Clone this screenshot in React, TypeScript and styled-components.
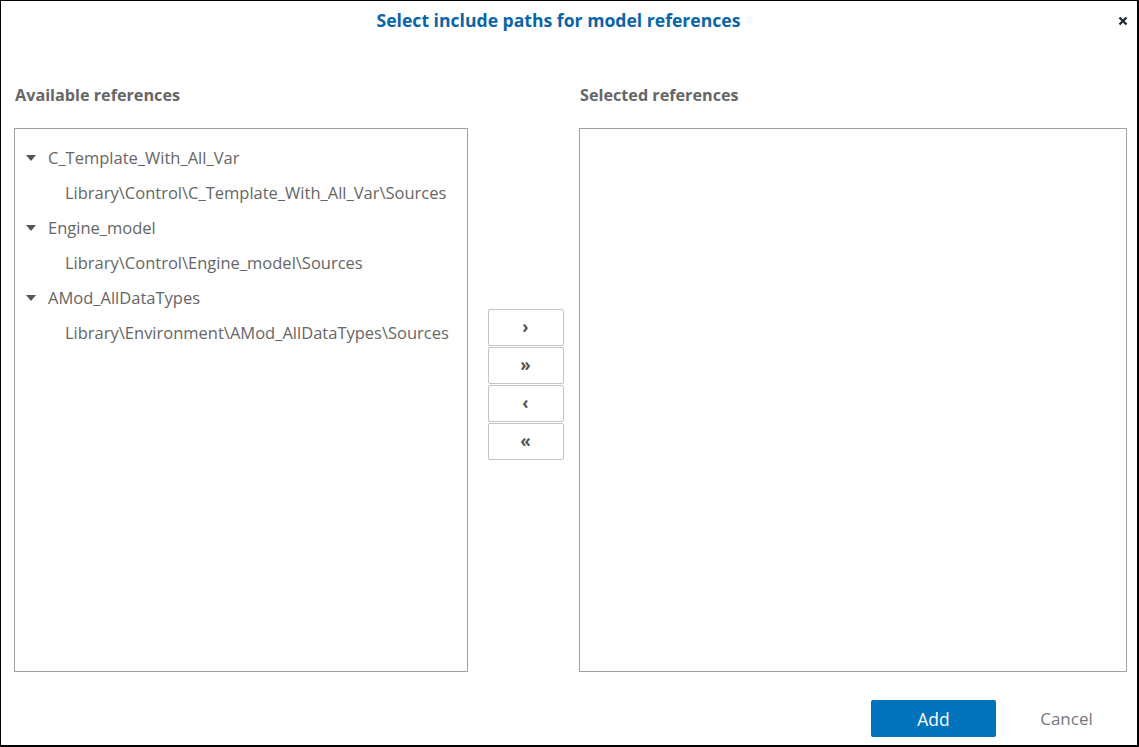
import React from "react";
import styled, { createGlobalStyle } from "styled-components";

const Global = createGlobalStyle`
  html, body { margin: 0; padding: 0; background: #fff; }
  body { font-family: "Open Sans", "Noto Sans", Arial, sans-serif; }
  * { box-sizing: border-box; }
`;

const Dialog = styled.div`
  width: 1139px;
  height: 747px;
  border-style: solid;
  border-color: #000;
  border-width: 1px 2px 2px 1px;
  display: flex;
  flex-direction: column;
  background: #fff;
`;

const Header = styled.div`
  display: flex;
  align-items: center;
  height: 40px;
`;

const Title = styled.h1`
  flex: 1;
  margin: 0;
  padding-bottom: 2px;
  text-align: center;
  font-size: 17.6px;
  font-weight: 700;
  color: #0a64a8;
  line-height: 38px;
`;

const CloseButton = styled.button`
  width: 21px;
  height: 40px;
  padding: 0 7px 0 0;
  border: none;
  background: none;
  display: flex;
  align-items: center;
  justify-content: center;
  cursor: pointer;
`;

const Body = styled.div`
  display: flex;
  padding: 40px 0 0 13px;
`;

const Column = styled.div<{ $w: number }>`
  width: ${(p) => p.$w}px;
  display: flex;
  flex-direction: column;
`;

const Label = styled.div`
  font-size: 16.2px;
  font-weight: 700;
  color: #666;
  line-height: 28px;
  padding-left: 1px;
  margin-bottom: 19px;
`;

const ListBox = styled.div`
  height: 544px;
  border: 1px solid #a0a0a0;
  padding: 11px 0 0 0;
`;

const Middle = styled.div`
  width: 111px;
  display: flex;
  flex-direction: column;
  align-items: center;
  padding-top: 228px;
  gap: 1px;
  padding-left: 4px;
`;

const MoveButton = styled.button`
  width: 76px;
  height: 37px;
  border: 1px solid #c4c4c4;
  border-radius: 2px;
  background: #fff;
  color: #555;
  font-family: "Open Sans", Arial, sans-serif;
  font-size: 17px;
  font-weight: 700;
  line-height: 1;
  padding: 0 0 2px 0;
  display: flex;
  align-items: center;
  justify-content: center;
  cursor: pointer;
`;

const TreeRow = styled.div<{ $level: number }>`
  display: flex;
  align-items: center;
  height: 35px;
  padding-left: ${(p) => (p.$level === 0 ? 11 : 50)}px;
  font-size: 16.5px;
  color: #666;
  white-space: nowrap;
`;

const Caret = styled.svg`
  width: 10px;
  height: 6px;
  margin-right: 12px;
  flex: none;
`;

const Footer = styled.div`
  display: flex;
  justify-content: flex-end;
  align-items: center;
  padding: 28px 0 0 0;
`;

const PrimaryButton = styled.button`
  width: 125px;
  height: 37px;
  border: none;
  border-radius: 2px;
  background: #0073bb;
  color: #fff;
  font-family: "Open Sans", Arial, sans-serif;
  font-size: 17.5px;
  cursor: pointer;
`;

const TextButton = styled.button`
  width: 141px;
  height: 37px;
  border: none;
  background: none;
  color: #777;
  font-family: "Open Sans", Arial, sans-serif;
  font-size: 17px;
  padding: 0;
  cursor: pointer;
`;

const tree = [
  { name: "C_Template_With_All_Var", path: "Library\\Control\\C_Template_With_All_Var\\Sources" },
  { name: "Engine_model", path: "Library\\Control\\Engine_model\\Sources" },
  { name: "AMod_AllDataTypes", path: "Library\\Environment\\AMod_AllDataTypes\\Sources" },
];

export default function App() {
  return (
    <>
      <Global />
      <Dialog>
        <Header>
          <Title>Select include paths for model references</Title>
          <CloseButton aria-label="Close">
            <svg width="10" height="10" viewBox="0 0 10 10">
              <path d="M1.5 1.5 L8.5 8.5 M8.5 1.5 L1.5 8.5" stroke="#1d2b33" strokeWidth="2.4" strokeLinecap="butt" />
            </svg>
          </CloseButton>
        </Header>
        <Body>
          <Column $w={454}>
            <Label>Available references</Label>
            <ListBox>
              {tree.map((t) => (
                <React.Fragment key={t.name}>
                  <TreeRow $level={0}>
                    <Caret viewBox="0 0 10 6">
                      <path d="M0 0 L10 0 L5 6 Z" fill="#555" />
                    </Caret>
                    {t.name}
                  </TreeRow>
                  <TreeRow $level={1}>{t.path}</TreeRow>
                </React.Fragment>
              ))}
            </ListBox>
          </Column>
          <Middle>
            <MoveButton aria-label="Move selected">›</MoveButton>
            <MoveButton aria-label="Move all">»</MoveButton>
            <MoveButton aria-label="Remove selected">‹</MoveButton>
            <MoveButton aria-label="Remove all">«</MoveButton>
          </Middle>
          <Column $w={548}>
            <Label>Selected references</Label>
            <ListBox />
          </Column>
        </Body>
        <Footer>
          <PrimaryButton>Add</PrimaryButton>
          <TextButton>Cancel</TextButton>
        </Footer>
      </Dialog>
    </>
  );
}
